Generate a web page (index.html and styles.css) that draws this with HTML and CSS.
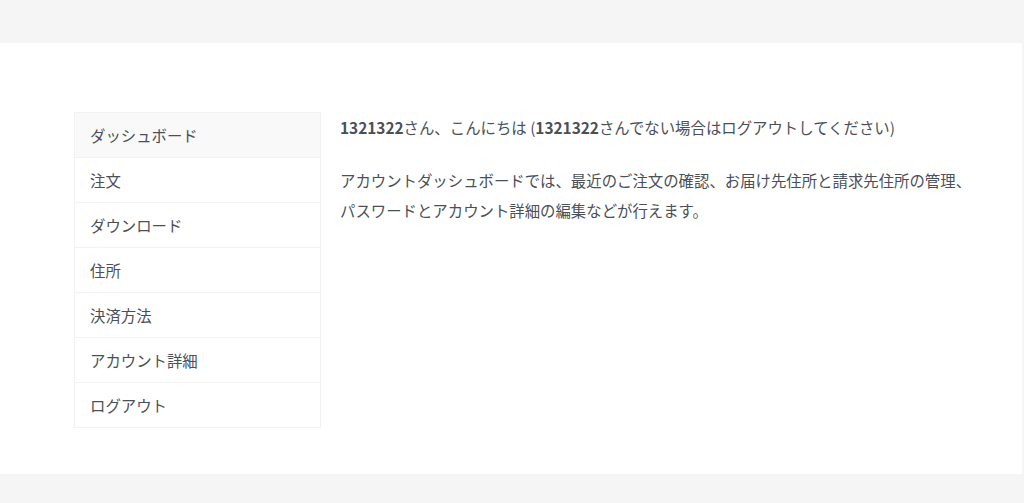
FILE: index.html
```html
<!DOCTYPE html>
<html lang="ja">
<head>
<meta charset="utf-8">
<title>マイアカウント</title>
<link rel="stylesheet" href="styles.css">
</head>
<body>
<div class="top-band"></div>
<main class="main">
  <div class="account">
    <nav class="account-nav">
      <ul class="nav-list">
        <li class="nav-item is-active"><a href="#">ダッシュボード</a></li>
        <li class="nav-item"><a href="#">注文</a></li>
        <li class="nav-item"><a href="#">ダウンロード</a></li>
        <li class="nav-item"><a href="#">住所</a></li>
        <li class="nav-item"><a href="#">決済方法</a></li>
        <li class="nav-item"><a href="#">アカウント詳細</a></li>
        <li class="nav-item"><a href="#">ログアウト</a></li>
      </ul>
    </nav>
    <div class="account-content">
      <p class="greet"><strong>1321322</strong>さん、こんにちは (<strong>1321322</strong>さんでない場合は<a href="#">ログアウト</a>してください)</p>
      <p class="intro">アカウントダッシュボードでは、最近のご注文の確認、お届け先住所と請求先住所の管理、パスワードとアカウント詳細の編集などが行えます。</p>
    </div>
  </div>
</main>
<div class="bottom-band"></div>
</body>
</html>
```

FILE: styles.css
```css
html, body {
  margin: 0;
  padding: 0;
}
body {
  background: #f5f5f5;
  font-family: "Noto Sans CJK JP", "Noto Sans", sans-serif;
  font-size: 15.4px;
  color: #4b4f58;
}
.top-band {
  height: 43px;
}
.main {
  background: #ffffff;
  width: calc(100% - 2px);
  height: 431px;
  box-sizing: border-box;
  padding: 69px 0 0 74px;
}
.account {
  display: flex;
  align-items: flex-start;
  gap: 19px;
}
.account-nav {
  width: 247px;
  flex: none;
}
.nav-list {
  list-style: none;
  margin: 0;
  padding: 0;
  border: 1px solid #f2f2f2;
}
.nav-item {
  border-top: 1px solid #f2f2f2;
}
.nav-item:first-child {
  border-top: none;
}
.nav-item a {
  display: block;
  height: 44px;
  line-height: 45px;
  padding: 0 15px;
  color: #4b4f58;
  text-decoration: none;
}
.nav-item.is-active a {
  background: #f9f9f9;
}
.account-content {
  width: 640px;
  flex: none;
}
.account-content p {
  margin: 0 0 23px;
  line-height: 30px;
}
.account-content strong {
  font-weight: 700;
}
.account-content a {
  color: #4b4f58;
  text-decoration: none;
}
.bottom-band {
  height: 29px;
}
```
